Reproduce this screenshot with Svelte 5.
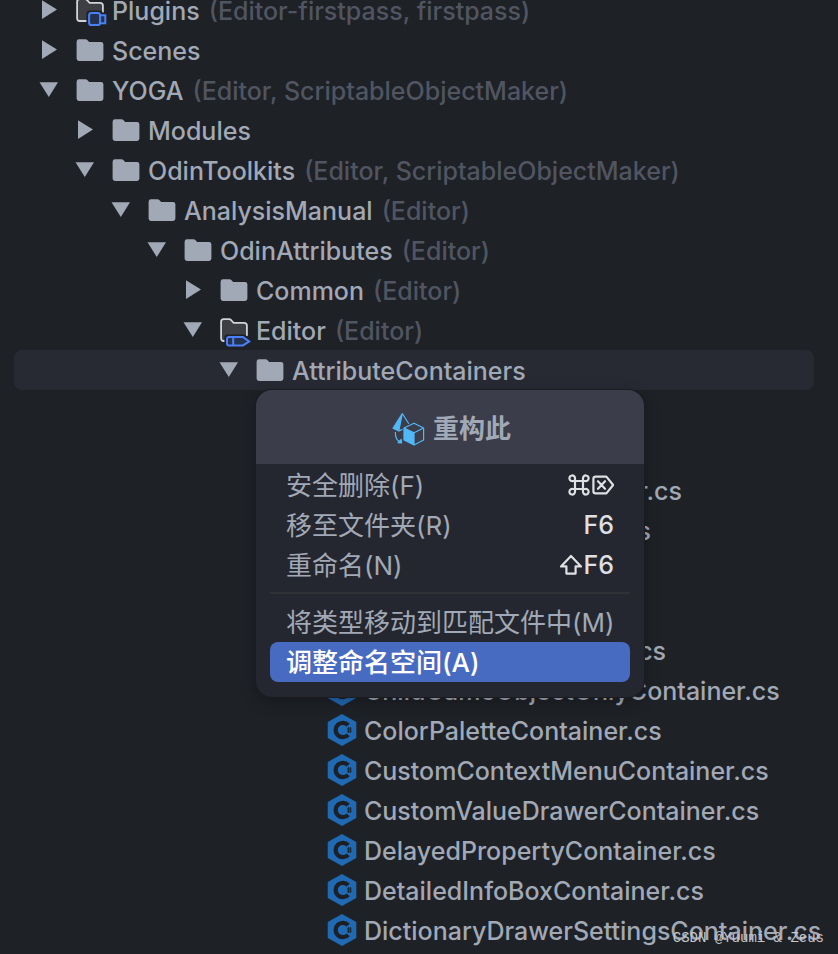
<script>
  const nodes = [
    { level: 0, kind: 'plugins', open: false, name: 'Plugins', note: '(Editor-firstpass, firstpass)' },
    { level: 0, kind: 'folder', open: false, name: 'Scenes' },
    { level: 0, kind: 'folder', open: true, name: 'YOGA', note: '(Editor, ScriptableObjectMaker)' },
    { level: 1, kind: 'folder', open: false, name: 'Modules' },
    { level: 1, kind: 'folder', open: true, name: 'OdinToolkits', note: '(Editor, ScriptableObjectMaker)' },
    { level: 2, kind: 'folder', open: true, name: 'AnalysisManual', note: '(Editor)' },
    { level: 3, kind: 'folder', open: true, name: 'OdinAttributes', note: '(Editor)' },
    { level: 4, kind: 'folder', open: false, name: 'Common', note: '(Editor)' },
    { level: 4, kind: 'editor', open: true, name: 'Editor', note: '(Editor)' },
    { level: 5, kind: 'folder', open: true, name: 'AttributeContainers', selected: true },
    { level: 7, kind: 'blank', name: '' },
    { level: 7, kind: 'blank', name: '' },
    { level: 7, kind: 'file', name: 'AssetSelectorContainer.cs' },
    { level: 7, kind: 'file', name: 'AssetsOnlyContainer.cs' },
    { level: 7, kind: 'blank', name: '' },
    { level: 7, kind: 'blank', name: '' },
    { level: 7, kind: 'file', name: 'ButtonGroupContainer.cs' },
    { level: 7, kind: 'file', name: 'ChildGameObjectOnlyContainer.cs' },
    { level: 7, kind: 'file', name: 'ColorPaletteContainer.cs' },
    { level: 7, kind: 'file', name: 'CustomContextMenuContainer.cs' },
    { level: 7, kind: 'file', name: 'CustomValueDrawerContainer.cs' },
    { level: 7, kind: 'file', name: 'DelayedPropertyContainer.cs' },
    { level: 7, kind: 'file', name: 'DetailedInfoBoxContainer.cs' },
    { level: 7, kind: 'file', name: 'DictionaryDrawerSettingsContainer.cs' }
  ];

  const groups = [
    [
      { label: '安全删除(F)', icons: ['command', 'delete'] },
      { label: '移至文件夹(R)', icons: [], key: 'F6' },
      { label: '重命名(N)', icons: ['shift'], key: 'F6' }
    ],
    [
      { label: '将类型移动到匹配文件中(M)' },
      { label: '调整命名空间(A)', active: true }
    ]
  ];

  const keyIcons = {
    command: 'M7 7H15V15H7ZM7 7H4.8A2.8 2.8 0 1 1 7 4.2ZM15 7V4.2A2.8 2.8 0 1 1 17.2 7ZM15 15H17.2A2.8 2.8 0 1 1 15 17.8ZM7 15V17.8A2.8 2.8 0 1 1 4.8 15Z',
    delete: 'M3.6 2.6H14.4L21.2 11L14.4 19.4H3.6Q1.4 19.4 1.4 17.2V4.8Q1.4 2.6 3.6 2.6ZM6 7.2L13 14.8M13 7.2L6 14.8',
    shift: 'M11 2L21 12.4H15.6V19.6H6.4V12.4H1Z'
  };
</script>

<main>
  <ul class="tree">
    {#each nodes as node}
      <li class="row" class:selected={node.selected}>
        <div class="node" style="padding-left: {node.level * 36}px">
          {#if node.open !== undefined}
            <button class="toggle" aria-label="{node.open ? '折叠' : '展开'} {node.name}" aria-expanded={node.open}>
              <svg width="20" height="20" viewBox="0 0 20 20">
                <path d={node.open ? 'M0.5 2.3H19L9.8 17Z' : 'M3 0.2V19L18 9.6Z'} fill="#a1a8b6" />
              </svg>
            </button>
          {:else}
            <span class="toggle"></span>
          {/if}
          <svg class="icon" width="28" height="28" viewBox="0 0 28 28">
            {#if node.kind === 'folder'}
              <path d="M3 3.3H9.6Q10.6 3.3 11.3 3.9L13.2 5.9H25Q27.4 5.9 27.4 8.3V22.6Q27.4 25 25 25H3Q0.6 25 0.6 22.6V5.7Q0.6 3.3 3 3.3Z" fill="#a1a8b6" />
            {:else if node.kind === 'plugins' || node.kind === 'editor'}
              <path d="M3.6 3.2H9.2Q10.2 3.2 11 4L13.6 6.8H24Q26.9 6.8 26.9 9.6V22.4Q26.9 25 24.2 25H3.8Q1.1 25 1.1 22.2V5.8Q1.1 3.2 3.6 3.2Z" fill="#3d3f43" stroke="#d0d3d9" stroke-width="1.8" />
              {#if node.kind === 'plugins'}
                <path d="M10.4 32V17.5Q10.4 14.4 13.5 14.4H24Q26.6 14.4 26.6 16.4H32V32Z" fill="#1e2126" />
                <rect x="13.1" y="17.1" width="11" height="12" rx="2.4" fill="#24324f" stroke="#4a80f5" stroke-width="2" />
                <rect x="24.1" y="19.3" width="5.2" height="8" fill="#24324f" stroke="#4a80f5" stroke-width="2" />
              {:else}
                <path d="M4.4 32V21.4Q4.4 18.4 7.4 18.4H23.6L32 22V32Z" fill="#1e2126" />
                <path d="M9 21.1H23L29.2 25.4L23 29.4H9Q7 29.4 7 27.4V23.1Q7 21.1 9 21.1ZM13.2 21V29.4" fill="#24324f" stroke="#4a80f5" stroke-width="2" />
              {/if}
            {:else if node.kind === 'file'}
              <path d="M14 -2L28.3 6V22L14 30L-0.3 22V6Z" fill="#2069b3" />
              <path d="M20.2 9.2A7.2 7.2 0 1 0 20.2 18.8" fill="none" stroke="#1c2026" stroke-width="4.2" />
              <path d="M20.4 11V17M22.4 11V17M19 13H23.6M19 15.2H23.6" stroke="#1c2026" stroke-width="0.9" />
            {/if}
          </svg>
          <span class="name">{node.name}</span>
          {#if node.note}<span class="note">{node.note}</span>{/if}
        </div>

        {#if node.selected}
          <section class="popup" aria-labelledby="popup-title">
            <header>
              <svg width="33" height="34" viewBox="0 0 33 34" fill="none" stroke="#52b7f6" stroke-width="1.2" stroke-linejoin="round">
                <path d="M10.3 1.5L1 16.3L6.8 19Z" fill="#52b7f6" />
                <path d="M10.3 1.5L16.8 11.8M6.8 19L10.4 17.4" />
                <path d="M3.4 20Q3 27.6 8 29.8" />
                <path d="M6 30.6L9.6 30.8L9.2 27.4Z" fill="#52b7f6" />
                <path d="M12 16L22 20.8V33L12 28Z" fill="#52b7f6" />
                <path d="M12 16L22 11.2L31.6 16V28L22 33M22 20.8L31.6 16" />
              </svg>
              <h2 id="popup-title">重构此</h2>
            </header>
            <div class="actions">
              {#each groups as group, i}
                {#if i > 0}<hr />{/if}
                {#each group as item}
                  <button class="action" class:active={item.active}>
                    <span>{item.label}</span>
                    {#if item.icons}
                      <kbd>
                        {#each item.icons as icon}
                          <svg width="22" height="22" viewBox="0 0 22 22" role="img" aria-label={icon}>
                            <path d={keyIcons[icon]} fill="none" stroke="currentColor" stroke-width="2.2" stroke-linejoin="round" stroke-linecap="round" />
                          </svg>
                        {/each}
                        {#if item.key}<span>{item.key}</span>{/if}
                      </kbd>
                    {/if}
                  </button>
                {/each}
              {/each}
            </div>
          </section>
        {/if}
      </li>
    {/each}
  </ul>
  <p class="credit">CSDN @Yuumi &amp; Zeus</p>
</main>

<style>
  :global(body) {
    background: #1e2126;
  }

  main {
    position: relative;
    overflow: hidden;
    background: #1e2126;
    color: #a1a8b6;
    font: 26px/40px Inter, 'Noto Sans CJK SC', sans-serif;
  }

  .tree {
    list-style: none;
    margin: -10px 0 0;
    padding: 0 24px 4px 14px;
  }

  .row {
    position: relative;
    height: 40px;
    padding-left: 25px;
    border-radius: 8px;
  }

  .selected {
    background: #272a33;
  }

  .node {
    display: flex;
    align-items: center;
    height: 40px;
    white-space: nowrap;
    font-size: 25px;
    font-weight: 500;
  }

  button {
    border: 0;
    padding: 0;
    background: none;
    color: inherit;
    font: inherit;
    text-align: left;
  }

  .toggle {
    display: flex;
    flex: none;
    width: 20px;
    height: 20px;
    margin-right: 17px;
  }

  .icon {
    flex: none;
    overflow: visible;
    margin-right: 8px;
  }

  .name {
    padding-top: 2px;
  }

  .note {
    padding-top: 2px;
    margin-left: 9px;
    color: #505561;
  }

  .popup {
    position: absolute;
    z-index: 1;
    top: 100%;
    left: 242px;
    width: 388px;
    overflow: hidden;
    border-radius: 16px;
    background: #24272f;
    box-shadow: 0 0 0 1px #1a1c20, 0 4px 16px rgba(0, 0, 0, 0.3);
  }

  header {
    display: flex;
    align-items: center;
    justify-content: center;
    gap: 8px;
    box-sizing: border-box;
    height: 74px;
    padding: 3px 0 0 3px;
    background: #3b3e4a;
  }

  h2 {
    margin: 0;
    font-size: 26px;
    font-weight: 700;
  }

  .actions {
    display: flex;
    flex-direction: column;
    padding: 1px 14px 15px;
  }

  .action {
    display: flex;
    justify-content: space-between;
    box-sizing: border-box;
    height: 40px;
    padding: 1px 16px 0;
    border-radius: 8px;
    white-space: nowrap;
  }

  .active {
    background: #486bc2;
    color: #fff;
    font-weight: 500;
  }

  kbd {
    display: flex;
    align-items: center;
    gap: 2px;
    height: 38px;
    color: #dfe0e3;
    font: inherit;
    font-size: 25px;
    font-weight: 500;
  }

  hr {
    width: 100%;
    height: 2px;
    margin: 7px 0 8px;
    border: 0;
    background: #2e3136;
  }

  .credit {
    position: absolute;
    right: 14px;
    bottom: 6px;
    margin: 0;
    color: #c4c6ca;
    font: 14px/20px 'Liberation Mono', monospace;
  }
</style>
